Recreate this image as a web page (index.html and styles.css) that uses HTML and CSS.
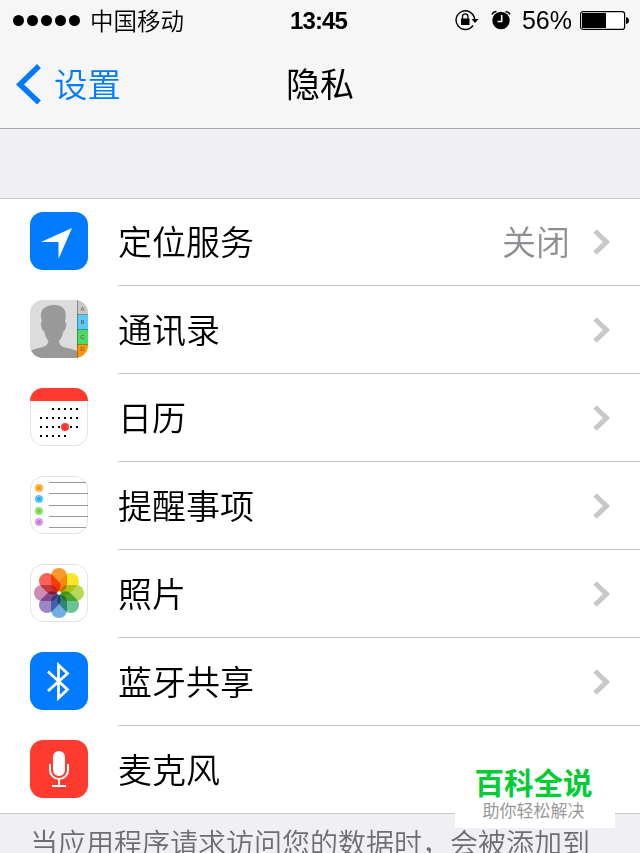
FILE: index.html
```html
<!DOCTYPE html>
<html lang="zh-CN">
<head>
    <meta charset="UTF-8">
    <title>隐私</title>
    <link rel="stylesheet" href="styles.css">
</head>
<body>
    <header class="header">
        <div class="status-bar">
            <div class="status-left">
                <svg class="signal" width="68" height="12" viewBox="0 0 68 12">
                    <circle cx="5.5" cy="6.5" r="5.5"/><circle cx="19.5" cy="6.5" r="5.5"/><circle cx="33.5" cy="6.5" r="5.5"/><circle cx="47.5" cy="6.5" r="5.5"/><circle cx="61.5" cy="6.5" r="5.5"/>
                </svg>
                <span class="carrier">中国移动</span>
            </div>
            <span class="time">13:45</span>
            <div class="status-right">
                <svg class="lock" width="24" height="22" viewBox="0 0 24 22">
                    <path d="M18 16.5A9.3 9.3 0 1 1 19.6 10" fill="none" stroke="#000" stroke-width="1.4"/>
                    <path d="M16.5 10h7l-3.5 4z"/>
                    <path d="M6 9.5h8.5V16H6z"/>
                    <path d="M7.5 10V7.5a2.7 2.7 0 0 1 5.4 0V10" fill="none" stroke="#000" stroke-width="1.3"/>
                </svg>
                <svg class="alarm" width="20" height="20" viewBox="0 0 20 20">
                    <circle cx="10" cy="10.5" r="8.7"/>
                    <path d="M1 4.5Q2 1.8 5.5 1.5M19 4.5Q18 1.8 14.5 1.5" fill="none" stroke="#000" stroke-width="1.5"/>
                    <path d="M10.7 5v6.5H6.5" fill="none" stroke="#f6f6f6" stroke-width="1.6"/>
                </svg>
                <span class="percent">56%</span>
                <svg class="battery" width="50" height="20" viewBox="0 0 50 20">
                    <rect x="0.6" y="1.6" width="44" height="17.8" rx="2.5" fill="#fff" stroke="#000" stroke-width="1.2"/>
                    <rect x="2" y="3" width="24" height="15"/>
                    <path d="M46 7q3 .5 3 3.5t-3 3.5z"/>
                </svg>
            </div>
        </div>
        <nav class="nav-bar">
            <a class="back">
                <svg width="26" height="42" viewBox="0 0 26 42"><path d="M23 3L4 21.5l19 18" fill="none" stroke="#007aff" stroke-width="5.5"/></svg>
                <span>设置</span>
            </a>
            <h1 class="title">隐私</h1>
        </nav>
    </header>

    <ul class="list">
        <li class="row">
            <svg class="icon" viewBox="0 0 58 58">
                <rect width="58" height="58" rx="13" fill="#007aff"/>
                <path d="M42 16L28.5 47V30H11z" fill="#fff"/>
            </svg>
            <div class="cell">
                <span class="label">定位服务</span>
                <span class="value">关闭</span>
                <svg class="arrow" viewBox="0 0 18 26"><path d="M2 2l11.5 11L2 24" /></svg>
            </div>
        </li>
        <li class="row">
            <svg class="icon" viewBox="0 0 58 58">
                <clipPath id="round"><rect width="58" height="58" rx="13"/></clipPath>
                <g clip-path="url(#round)">
                    <rect width="58" height="58" fill="#dcdcdc"/>
                    <path d="M0 58V51Q3 49 11 47.5Q18 46 18.500 41Q15 37 14 31Q11.5 30 11 25Q10.5 22 12 22Q9 12 14 8Q18 5 24 5Q31 5 34 9Q37 13 35 22Q37 23 36 27Q35 31 33.5 31Q32 38 29 41Q29 46 35 47.5Q43 49 47 51V58z" fill="#999"/>
                    <rect x="47" width="11" height="15" fill="#c8c8c2"/>
                    <rect x="47" y="15" width="11" height="15" fill="#5ac8fa"/>
                    <rect x="47" y="30" width="11" height="14.5" fill="#4cd964"/>
                    <rect x="47" y="44.5" width="11" height="14" fill="#ff9500"/>
                    <path d="M47.5 0V58M47 14.5h11M47 29.5h11M47 44.5h11" stroke="#000" stroke-opacity=".3"/>
                    <g class="tabs"><text x="52.5" y="11">A</text><text x="52.5" y="24">B</text><text x="52.5" y="39">C</text><text x="52.5" y="51">D</text></g>
                </g>
            </svg>
            <div class="cell">
                <span class="label">通讯录</span>
                <svg class="arrow" viewBox="0 0 18 26"><path d="M2 2l11.5 11L2 24" /></svg>
            </div>
        </li>
        <li class="row">
            <svg class="icon" viewBox="0 0 58 58">
                <rect x=".5" y=".5" width="57" height="57" rx="12.5" fill="#fff" stroke="#e2e2e2"/>
                <path d="M0 13A13 13 0 0 1 13 0H45A13 13 0 0 1 58 13z" fill="#ff3b30"/>
                <g stroke="#000" stroke-width="2" stroke-dasharray="2 4">
                    <path d="M22 21H48M10 30H48M10 39H48M10 48H36"/>
                </g>
                <circle cx="35" cy="39" r="4" fill="#ff3b30"/>
            </svg>
            <div class="cell">
                <span class="label">日历</span>
                <svg class="arrow" viewBox="0 0 18 26"><path d="M2 2l11.5 11L2 24" /></svg>
            </div>
        </li>
        <li class="row">
            <svg class="icon" viewBox="0 0 58 58">
                <rect x=".5" y=".5" width="57" height="57" rx="12.5" fill="#fff" stroke="#e2e2e2"/>
                <path d="M19 6.5H56M19 17.5H58M19 29.5H58M19 40.5H58M19 51.5H56" stroke="#999"/>
                <g stroke-opacity=".65" stroke-width="1.5">
                    <circle cx="9" cy="12" r="3.3" fill="#ff9500" stroke="#ff9500"/>
                    <circle cx="9" cy="23" r="3.3" fill="#1badf8" stroke="#1badf8"/>
                    <circle cx="9" cy="35" r="3.3" fill="#63da38" stroke="#63da38"/>
                    <circle cx="9" cy="46" r="3.3" fill="#cc73e1" stroke="#cc73e1"/>
                </g>
                <g fill="none" stroke="#fff" stroke-opacity=".5" stroke-width=".8">
                    <circle cx="9" cy="12" r="2.6"/><circle cx="9" cy="23" r="2.6"/><circle cx="9" cy="35" r="2.6"/><circle cx="9" cy="46" r="2.6"/>
                </g>
            </svg>
            <div class="cell">
                <span class="label">提醒事项</span>
                <svg class="arrow" viewBox="0 0 18 26"><path d="M2 2l11.5 11L2 24" /></svg>
            </div>
        </li>
        <li class="row">
            <svg class="icon" viewBox="0 0 58 58">
                <rect x=".5" y=".5" width="57" height="57" rx="12.5" fill="#fff" stroke="#e2e2e2"/>
                <defs><path id="petal" d="M0-1Q-8-2-8-9V-17A8 8 0 0 1 8-17V-9Q8-2 0-1z"/></defs>
                <g class="petals" transform="translate(29 29)">
                    <use href="#petal" fill="#fb9a2c"/>
                    <use href="#petal" fill="#f9e52a" transform="rotate(45)"/>
                    <use href="#petal" fill="#b6d957" transform="rotate(90)"/>
                    <use href="#petal" fill="#6ac290" transform="rotate(135)"/>
                    <use href="#petal" fill="#70afe0" transform="rotate(180)"/>
                    <use href="#petal" fill="#9b87c4" transform="rotate(225)"/>
                    <use href="#petal" fill="#cd8cb8" transform="rotate(270)"/>
                    <use href="#petal" fill="#fb6358" transform="rotate(315)"/>
                </g>
                <circle cx="29" cy="29" r="1.8" fill="#fff"/>
            </svg>
            <div class="cell">
                <span class="label">照片</span>
                <svg class="arrow" viewBox="0 0 18 26"><path d="M2 2l11.5 11L2 24" /></svg>
            </div>
        </li>
        <li class="row">
            <svg class="icon" viewBox="0 0 58 58">
                <rect width="58" height="58" rx="13" fill="#007aff"/>
                <path d="M18 19.5L37.5 37.5L28.5 46V13L37.5 21.5L18 39" fill="none" stroke="#fff" stroke-width="2.8"/>
            </svg>
            <div class="cell">
                <span class="label">蓝牙共享</span>
                <svg class="arrow" viewBox="0 0 18 26"><path d="M2 2l11.5 11L2 24" /></svg>
            </div>
        </li>
        <li class="row">
            <svg class="icon" viewBox="0 0 58 58">
                <rect width="58" height="58" rx="13" fill="#ff3b30"/>
                <rect x="23" y="11" width="12" height="25" rx="6" fill="#fff"/>
                <path d="M20 24v6a9 9 0 0 0 18 0v-6M29 39v7M22 46h14" fill="none" stroke="#fff" stroke-width="2"/>
            </svg>
            <div class="cell">
                <span class="label">麦克风</span>
            </div>
        </li>
    </ul>

    <p class="note">当应用程序请求访问您的数据时，会被添加到</p>

    <div class="badge">
        <div class="badge-name">百科全说</div>
        <div class="badge-text">助你轻松解决</div>
    </div>
</body>
</html>
```

FILE: styles.css
```css
* {
    box-sizing: border-box;
}
body {
    margin: 0;
    width: 640px;
    height: 853px;
    overflow: hidden;
    position: relative;
    background-color: #efeff4;
    color: #000;
    font-family: "Noto Sans CJK SC", sans-serif;
    font-weight: 350;
}
svg {
    display: block;
    flex: none;
}
.header {
    height: 129px;
    background-color: #f6f6f6;
    border-bottom: 1px solid #a9a9ac;
}

/* 状态栏 */
.status-bar {
    height: 40px;
    display: grid;
    grid-template-columns: 1fr auto 1fr;
    align-items: center;
    padding: 0 10px 0 13px;
}
.status-left, .status-right {
    display: flex;
    align-items: center;
    margin-top: -1px;
}
.carrier {
    margin: -1px 0 0 9px;
    font-size: 23.5px;
    line-height: 40px;
}
.time {
    margin: 1px 0 0 -6px;
    font-family: "Liberation Sans", sans-serif;
    font-size: 24px;
    font-weight: bold;
    letter-spacing: -0.9px;
    line-height: 40px;
}
.status-right {
    justify-content: flex-end;
}
.alarm {
    margin-left: 12px;
}
.percent {
    margin: 1px 8px 0 11px;
    font-family: "Liberation Sans", sans-serif;
    font-size: 25px;
}

/* 导航栏 */
.nav-bar {
    height: 88px;
    display: grid;
    grid-template-columns: 1fr auto 1fr;
    align-items: center;
    padding: 0 16px;
}
.back {
    display: flex;
    align-items: center;
    gap: 12px;
    color: #007aff;
    font-size: 33.5px;
    line-height: 50px;
}
.back span {
    margin-top: -2px;
}
.title {
    margin: -2px 0 0;
    font-size: 34px;
    font-weight: 400;
    line-height: 50px;
}

/* 列表 */
.list {
    list-style-type: none;
    margin: 69px 0 0;
    padding: 0;
    background-color: #fff;
    box-shadow: inset 0 1px #c8c7cc;
    border-bottom: 1px solid #c8c7cc;
}
.row {
    height: 88px;
    display: flex;
    align-items: center;
    padding-left: 30px;
}
.row:last-child {
    height: 87px;
}
.icon {
    width: 58px;
    height: 58px;
    margin-top: -2px;
}
.cell {
    flex: 1;
    height: 100%;
    display: flex;
    align-items: center;
    margin-left: 30px;
    padding-right: 29px;
    border-bottom: 1px solid #c8c7cc;
}
.row:last-child .cell {
    border-bottom: none;
}
.label {
    flex: 1;
    margin-top: -2px;
    font-size: 34px;
}
.value {
    margin: -2px 23px 0 0;
    color: #8e8e93;
    font-size: 34px;
}
.arrow {
    width: 18px;
    height: 26px;
    margin-top: 1px;
    fill: none;
    stroke: #c7c7cc;
    stroke-width: 5;
}
.tabs {
    font-family: "Liberation Sans", sans-serif;
    font-size: 6px;
    text-anchor: middle;
    fill: #555;
}
.petals use {
    mix-blend-mode: multiply;
}
.note {
    margin: 7px 0 0 30px;
    color: #6d6d72;
    font-size: 28px;
    line-height: 42px;
    white-space: nowrap;
}

/* 右下角浮层 */
.badge {
    position: absolute;
    left: 455px;
    top: 758px;
    width: 160px;
    height: 70px;
    background-color: #fff;
    text-align: center;
}
.badge-name {
    padding: 3px 3px 0 0;
    color: #0c3;
    font-size: 29.5px;
    font-weight: bold;
    line-height: 40px;
}
.badge-text {
    padding-right: 3px;
    color: #999;
    font-size: 17px;
    font-weight: 400;
    line-height: 17px;
}
```
